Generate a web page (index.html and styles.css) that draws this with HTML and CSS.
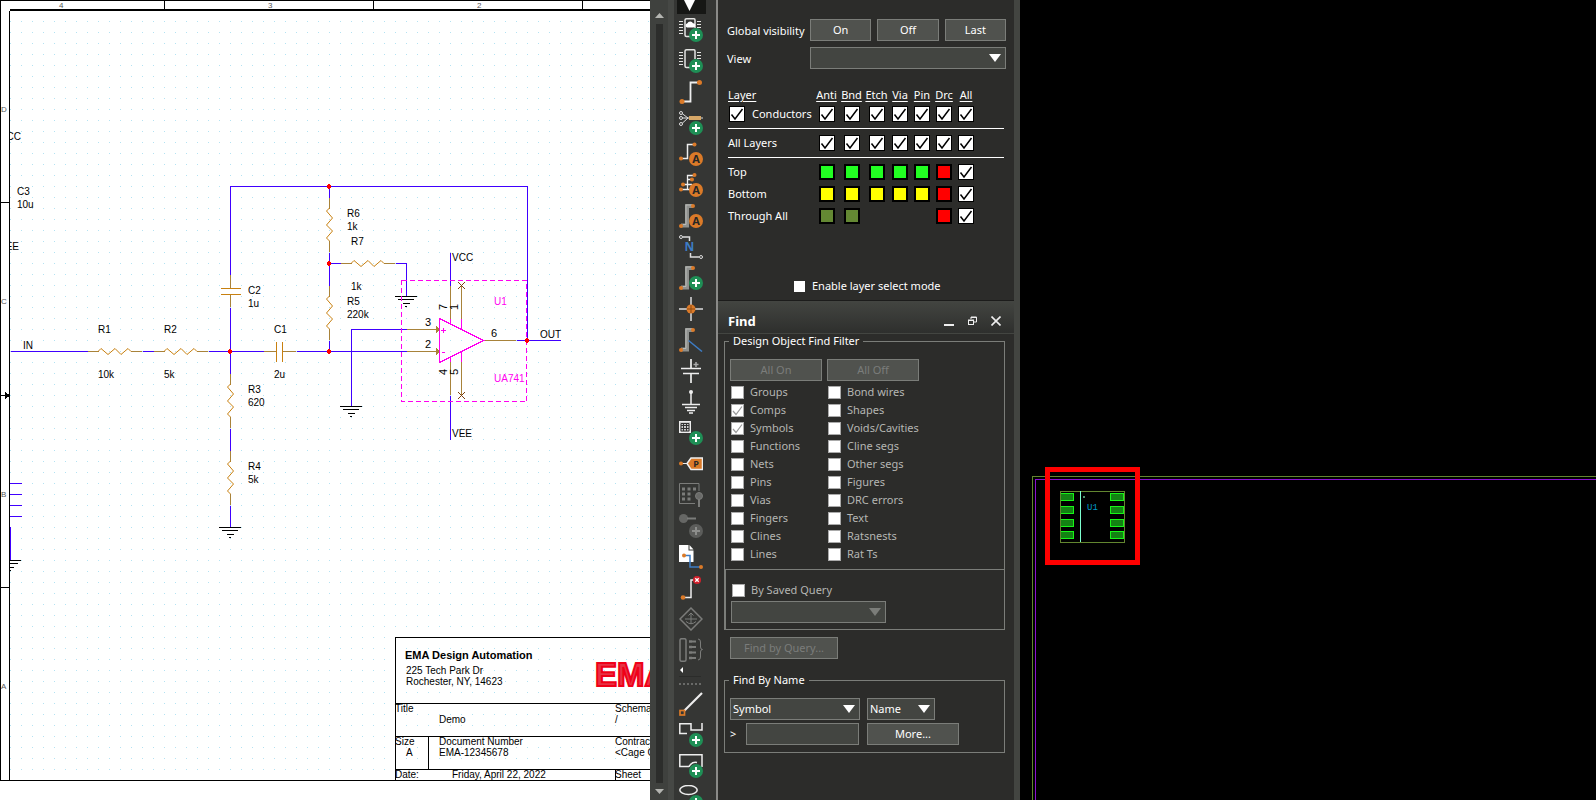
FILE: index.html
```html
<!DOCTYPE html>
<html lang="en">
<head>
<meta charset="utf-8">
<title>Schematic and PCB Layout</title>
<link rel="stylesheet" href="styles.css">
</head>
<body>
<main class="workspace">
  <section class="schematic" aria-label="Schematic">
    <svg class="sheet" role="img" aria-label="Op amp schematic">
      <defs>
        <pattern id="grid" width="11" height="11" patternUnits="userSpaceOnUse"><rect x="10" y="10" width="1" height="1" fill="#b4e2f2"/></pattern>
        <clipPath id="inner"><rect x="9" y="9" width="2000" height="2000"/></clipPath>
        <g id="res"><path class="lead" d="M0 .5H11M43 .5H54"/><path class="zig" d="M10 .5l3 -3 7 6 7 -6 6 6 7 -6 3 3"/></g>
        <g id="gnd"><path class="ink" d="M-11 .5H11M-8 3.5H8M-3 7.5H4M-1 10.5H1"/></g>
        <path id="junction" fill="#f00" d="M-1 -2h2v1h1v3h-1v1h-2v-1h-1v-3h1z"/>
      </defs>
      <rect x="9" y="11" width="100%" height="769" fill="url(#grid)"/>
      <g class="ink">
        <path d="M.5 780V.5H2000M9.5 780V11M0 780.5H2000"/>
        <path d="M164.500 0V9M373.500 0V9M582.500 0V9M0 202.500H9M0 587.500H9M0 395.500H9"/>
        <path d="M5 392l5 3.500-5 3.500z" fill="#000" stroke="none"/>
        <path d="M10 10H2000" stroke-width="2"/>
      </g>
      <g class="frame-text">
        <text x="59" y="8">4</text><text x="268" y="8">3</text><text x="477" y="8">2</text>
        <text x="1" y="112">D</text><text x="1" y="304">C</text><text x="1" y="497">B</text><text x="1" y="689">A</text>
      </g>
      <g class="wire">
        <path d="M11 351.500H88M143 351.500H154M209 351.500H264M297 351.500H407"/>
        <path d="M230.500 275V186.500H527.500V340M230.500 308V374M230.500 429V451M230.500 506V527"/>
        <path d="M329.500 186V198M329.500 253V286M329.500 341V351M329 263.500H341M396 263.500H406.500V296"/>
        <path d="M407 329.500H351.500V406M450.500 253V286M450.500 396V440M517 340.500H561"/>
        <path d="M10 483.500H22M10 494.500H22M10 505.500H22M10 516.500H22M10.500 527V560"/>
      </g>
      <use href="#res" transform="translate(88 351)"/>
      <use href="#res" transform="translate(154 351)"/>
      <use href="#res" transform="translate(341 263)"/>
      <use href="#res" transform="translate(230 374) rotate(90) scale(1 -1)"/>
      <use href="#res" transform="translate(230 451) rotate(90) scale(1 -1)"/>
      <use href="#res" transform="translate(329 198) rotate(90) scale(1 -1)"/>
      <use href="#res" transform="translate(329 286) rotate(90) scale(1 -1)"/>
      <path class="lead" d="M264 351.500H276M283 351.500H296M230.500 275V288M230.500 295V307"/>
      <path class="plate" d="M276.500 342V362M282.500 342V362M221 288.500H241M221 294.500H241"/>
      <use href="#gnd" x="230" y="527"/><use href="#gnd" x="351" y="406"/><use href="#gnd" x="406" y="296"/>
      <g clip-path="url(#inner)"><use href="#gnd" x="10" y="560"/></g>
      <path class="lead" d="M407 329.500H436M407 351.500H436M483 340.500H516M450.500 286V320M450.500 362V395M461.500 285V319M461.500 362V395"/>
      <path fill="#a8823a" d="M436 326l4 3.500-4 3.500zM436 348l4 3.500-4 3.500z"/>
      <path class="cross" d="M458 282l7 7M465 282l-7 7M458 392l7 7M465 392l-7 7"/>
      <path class="part" d="M439.500 318.500V362.500L483.500 340.500ZM450.500 319V323M461.500 319V329M450.500 358V362M461.500 351V362M441 330.500H446M443.500 328V333M442 352.500H445"/>
      <rect class="selection" x="401.500" y="280.500" width="125" height="121"/>
      <g><use href="#junction" x="329" y="186"/><use href="#junction" x="329" y="263"/><use href="#junction" x="329" y="351"/><use href="#junction" x="230" y="351"/><use href="#junction" x="527" y="340"/></g>
      <g class="label">
        <text x="23" y="349">IN</text><text x="98" y="333">R1</text><text x="98" y="378">10k</text>
        <text x="164" y="333">R2</text><text x="164" y="378">5k</text>
        <text x="274" y="333">C1</text><text x="274" y="378">2u</text>
        <text x="248" y="294">C2</text><text x="248" y="307">1u</text>
        <text x="248" y="393">R3</text><text x="248" y="406">620</text>
        <text x="248" y="470">R4</text><text x="248" y="483">5k</text>
        <text x="347" y="217">R6</text><text x="347" y="230">1k</text>
        <text x="351" y="245">R7</text><text x="351" y="290">1k</text>
        <text x="347" y="305">R5</text><text x="347" y="318">220k</text>
        <text x="452" y="261">VCC</text><text x="452" y="437">VEE</text><text x="540" y="338">OUT</text>
        <text x="17" y="195">C3</text><text x="17" y="208">10u</text>
        <g clip-path="url(#inner)"><text x="21" y="140" text-anchor="end">VCC</text><text x="19" y="250" text-anchor="end">VEE</text></g>
        <text class="mag" x="494" y="305">U1</text><text class="mag" x="494" y="382">UA741</text>
      </g>
      <g class="label pin">
        <text x="425" y="326">3</text><text x="425" y="348">2</text><text x="491" y="337">6</text>
        <text transform="translate(447 310) rotate(-90)">7</text><text transform="translate(458 310) rotate(-90)">1</text>
        <text transform="translate(447 375) rotate(-90)">4</text><text transform="translate(458 375) rotate(-90)">5</text>
      </g>
      <g class="ink"><path d="M395.500 780V637.500H2000M395 703.500H2000M395 736.500H2000M395 769.500H2000M428.500 736V769M615.500 769V780"/></g>
      <g class="label">
        <text class="company" x="405" y="659">EMA Design Automation</text>
        <text x="406" y="674">225 Tech Park Dr</text><text x="406" y="685">Rochester, NY, 14623</text>
        <text x="395" y="712">Title</text><text x="439" y="723">Demo</text><text x="615" y="712">Schematic</text><text x="615" y="723">/</text>
        <text x="395" y="745">Size</text><text x="406" y="756">A</text><text x="439" y="745">Document Number</text><text x="439" y="756">EMA-12345678</text>
        <text x="615" y="745">Contract</text><text x="615" y="756">&lt;Cage Code&gt;</text>
        <text x="395" y="778">Date:</text><text x="452" y="778">Friday, April 22, 2022</text><text x="615" y="778">Sheet</text>
      </g>
      <text class="logo" x="595" y="686">EMA</text>
    </svg>
  </section>

  <div class="scroll" aria-hidden="true">
    <svg width="9" height="5" viewBox="0 0 9 5"><path d="M4.500 0L9 5H0z" fill="#b4b5b1"/></svg>
    <div class="track"></div>
    <svg width="9" height="5" viewBox="0 0 9 5"><path d="M0 0H9L4.500 5z" fill="#b4b5b1"/></svg>
  </div>

  <svg width="0" height="0" class="defs" aria-hidden="true">
    <defs>
      <g id="plus"><circle cx="17" cy="17" r="7" fill="#1f8f56"/><path d="M13 17H21M17 13V21" stroke="#fff" stroke-width="2" fill="none"/></g>
      <g id="auto"><circle cx="17" cy="17" r="7" fill="#db7a28"/><text x="17" y="21" text-anchor="middle" class="glyph">A</text></g>
      <g id="chip" fill="none" stroke="#e4e4e2"><path d="M14 18.500H7.500Q6 18.500 6 17V2Q6 .8 7.500 .8H15Q16 .8 16 2V10" stroke-width="1.500"/><path d="M0 3.500H4M0 6.500H4M0 9.500H4M0 12.500H4M0 15.500H4M18 3.500H22M18 6.500H22M18 9.500H22"/></g>
      <g id="bracket"><path d="M2 21.500H8V2H14" fill="none" stroke="#8f918e" stroke-width="4"/><path d="M4 20.500H7V1H13" fill="none" stroke="#b9bab7"/><circle cx="14" cy="2" r="2" fill="#db7a28"/><circle cx="2" cy="22" r="2" fill="#db7a28"/></g>
    </defs>
  </svg>
  <div class="toolbar" role="toolbar" aria-label="Tools">
    <button class="tool current" aria-label="Select"><svg viewBox="0 10 24 14"><path d="M5 10H16L10.500 21z" fill="#fff"/></svg></button>
    <button class="tool" aria-label="Place cloud part"><svg viewBox="0 0 24 24"><use href="#chip"/><path d="M8 9.500a2.200 2.200 0 0 1 .4-4.200 3 3 0 0 1 5.600 0 2.100 2.100 0 0 1 .4 4.200z" fill="#fff"/><use href="#plus"/></svg></button>
    <button class="tool" aria-label="Place part"><svg viewBox="0 0 24 24"><use href="#chip"/><use href="#plus"/></svg></button>
    <button class="tool" aria-label="Place wire"><svg viewBox="0 0 24 24"><path d="M3 21.500H11.500V2.500H20" fill="none" stroke="#eee" stroke-width="1.800"/><circle cx="20.500" cy="2.500" r="2.500" fill="#db7a28"/><circle cx="3" cy="21.500" r="2.500" fill="#db7a28"/></svg></button>
    <button class="tool" aria-label="Place net group"><svg viewBox="0 0 24 24"><path d="M3 2.500L9 7 3 12.500M3 7H10M22 7H24" fill="none" stroke="#ddd"/><g fill="#353634" stroke="#ddd"><circle cx="2" cy="2" r="1.500"/><circle cx="2" cy="7" r="1.500"/><circle cx="2" cy="13" r="1.500"/></g><rect x="10" y="5" width="12" height="4" fill="#d6a767"/><use href="#plus"/></svg></button>
    <button class="tool" aria-label="Auto wire two points"><svg viewBox="0 0 24 24"><path d="M2 16.500H8.500V2.500H15" fill="none" stroke="#eee" stroke-width="1.500"/><g fill="#db7a28"><circle cx="15.500" cy="2.500" r="2"/><circle cx="2" cy="16.500" r="2"/></g><use href="#auto"/></svg></button>
    <button class="tool" aria-label="Auto wire multiple points"><svg viewBox="0 0 24 24"><path d="M2 16.500H8.500V2.500H15M8.500 6.500H13M4 11.500H13M8.500 16.500H11" fill="none" stroke="#eee" stroke-width="1.300"/><g fill="#db7a28"><circle cx="15.500" cy="2" r="2"/><circle cx="13" cy="6.500" r="2"/><circle cx="4" cy="11.500" r="2"/><circle cx="2" cy="16.500" r="2"/></g><use href="#auto"/></svg></button>
    <button class="tool" aria-label="Auto connect to bus"><svg viewBox="0 0 24 24"><use href="#bracket"/><use href="#auto"/></svg></button>
    <button class="tool" aria-label="Place net alias"><svg viewBox="0 0 24 24"><path d="M4 2H10.500V6M11.500 18V22H20" fill="none" stroke="#ddd" stroke-width="1.500"/><circle cx="2" cy="2" r="1.500" fill="none" stroke="#ddd"/><circle cx="22" cy="22" r="1.500" fill="none" stroke="#ddd"/><text x="10.500" y="16" text-anchor="middle" class="glyph blue">N</text></svg></button>
    <button class="tool" aria-label="Place bus"><svg viewBox="0 0 24 24"><use href="#bracket"/><use href="#plus"/></svg></button>
    <button class="tool" aria-label="Place junction"><svg viewBox="0 0 24 24"><path d="M0 12H24M12 0V24" stroke="#ddd" stroke-width="1.500"/><circle cx="12" cy="12" r="4.500" fill="#db7a28"/><path d="M8 12H16M12 8V16" stroke="#8d4a12"/></svg></button>
    <button class="tool" aria-label="Place bus entry"><svg viewBox="0 0 24 24"><use href="#bracket"/><path d="M9.500 12.500L23 23.500" stroke="#3d7cc4" stroke-width="1.500"/></svg></button>
    <button class="tool" aria-label="Place power"><svg viewBox="0 0 24 24"><path d="M12 0V9.500M2 9.500H22M4 14.500H20M12 14.500V24" stroke="#eee" stroke-width="1.700" fill="none"/><path d="M14.500 5.500H19.500M17 3V8" stroke="#aaa" stroke-width="1.500"/></svg></button>
    <button class="tool" aria-label="Place ground"><svg viewBox="0 0 24 24"><circle cx="12" cy="2" r="2" fill="#eee"/><path d="M12 2V14.500M3 14.500H21M6 17.500H18M8 20.500H16M10 23H14" stroke="#eee" stroke-width="1.500"/></svg></button>
    <button class="tool" aria-label="Place hierarchical block"><svg viewBox="0 0 24 24"><rect x=".5" y=".5" width="11" height="11" fill="#ccc" stroke="#eee"/><path d="M2 4.500H10M2 7.500H10M4.500 2V10M7.500 2V10M2 2.500H10V10H2z" stroke="#333" fill="none"/><use href="#plus"/></svg></button>
    <button class="tool" aria-label="Place port"><svg viewBox="0 0 24 24"><path d="M2 11.500H8" stroke="#eee"/><circle cx="2" cy="11.500" r="2" fill="#db7a28"/><path d="M8 11.500L12 6H23.500V17.500H12z" fill="#db7a28" stroke="#eee" stroke-width="1.500"/><text x="17" y="15" text-anchor="middle" class="glyph small">P</text></svg></button>
    <button class="tool" aria-label="Place pin" disabled><svg viewBox="0 0 24 24" fill="none" stroke="#7b7c7a"><path d="M20 8V.5H.5V20.500H16"/><path d="M3 6H6M8.500 6H11.500M14 6H17M3 11H6M8.500 11H11.500M3 16H6M8.500 16H11.500" stroke-width="3"/><circle cx="20" cy="13" r="3.500" fill="#6a6b69"/><path d="M20 16V24" stroke-width="2"/></svg></button>
    <button class="tool" aria-label="Place off-page pin" disabled><svg viewBox="0 0 24 24"><circle cx="4.500" cy="4.500" r="4.500" fill="#666765"/><path d="M8 4.500H17" stroke="#7b7c7a" stroke-width="2"/><circle cx="17" cy="17" r="7" fill="#5c5d5b"/><path d="M13 17H21M17 13V21" stroke="#8d8e8c" stroke-width="2"/></svg></button>
    <button class="tool" aria-label="Place off-page connector"><svg viewBox="0 0 24 24"><path d="M0 0H9.500V5.500H14.500V17H0z" fill="#fff"/><path d="M10.500 0L14.500 4.500H10.500z" fill="#fff"/><path d="M5 10.500H11V22H22" stroke="#3d7cc4" stroke-width="1.500" fill="none"/><circle cx="5" cy="10.500" r="2" fill="#db7a28"/><circle cx="22" cy="22" r="2" fill="#db7a28"/></svg></button>
    <button class="tool" aria-label="No connect"><svg viewBox="0 0 24 24"><path d="M4 21.500H12V4H15" fill="none" stroke="#eee" stroke-width="1.500"/><circle cx="4" cy="21.500" r="2.300" fill="#db7a28"/><circle cx="18" cy="4" r="4" fill="#d3202c"/><path d="M16.300 2.300l3.400 3.400M19.700 2.300l-3.400 3.400" stroke="#fff" stroke-width="1.300"/></svg></button>
    <button class="tool" aria-label="Signal navigation" disabled><svg viewBox="0 0 24 24" fill="none" stroke="#7b7c7a"><path d="M12 1L23 12 12 23 1 12z" stroke-width="1.500"/><path d="M12 6V17M9.500 8.500L12 6 14.500 8.500M6 12H18M7 14.500Q12 19 17 14.500"/></svg></button>
    <button class="tool" aria-label="NetGroup pins" disabled><svg viewBox="0 0 24 24" fill="none" stroke="#7b7c7a"><rect x="1" y=".7" width="6" height="22.500" rx="1.500" stroke-width="1.500"/><path d="M10 3.500H13M10 9H13M10 14.500H13M10 20H13" stroke-width="2.500"/><path d="M13 3.500H17M13 9H17M13 14.500H17M13 20H17" stroke-width="2"/><path d="M19 1Q21.500 1 21.500 4V9Q21.500 11.500 23.500 11.500 21.500 11.500 21.500 14V19Q21.500 22 19 22"/></svg></button>
    <div class="more"><svg width="3" height="6" viewBox="0 0 3 6"><path d="M3 0V6L0 3z" fill="#fff"/></svg></div>
    <div class="grip"></div>
    <button class="tool" aria-label="Draw line"><svg viewBox="0 0 24 24"><path d="M23 1L4 20" stroke="#eee" stroke-width="2.200"/><rect x="1" y="18.500" width="4.500" height="4.500" fill="#353634" stroke="#db7a28" stroke-width="1.700"/></svg></button>
    <button class="tool" aria-label="Draw polyline"><svg viewBox="0 0 24 24"><path d="M8 10.500H.8V.8H12V7H23V0" fill="none" stroke="#eee" stroke-width="1.500"/><use href="#plus"/></svg></button>
    <button class="tool" aria-label="Draw shape"><svg viewBox="0 0 24 24"><path d="M10 12.500H.8V.8H23V13M10 12.500Q13 7.500 18 8.500" fill="none" stroke="#eee" stroke-width="1.500"/><use href="#plus"/></svg></button>
    <button class="tool" aria-label="Draw ellipse"><svg viewBox="0 0 24 24"><ellipse cx="9.500" cy="5" rx="8.700" ry="4.500" fill="none" stroke="#eee" stroke-width="1.500"/><use href="#plus"/></svg></button>
  </div>

  <aside class="panel">
    <section class="visibility" aria-label="Visibility">
      <div class="vis-grid">
        <span class="vis-name">Global visibility</span>
        <div class="btn-row"><button class="btn">On</button><button class="btn">Off</button><button class="btn">Last</button></div>
        <label class="vis-name" for="view">View</label>
        <select id="view" class="select"><option></option></select>
      </div>
      <table class="layers">
        <colgroup><col class="c-name"><col class="c-wide"><col class="c-wide"><col class="c-wide"><col class="c-thin"><col class="c-thin"><col class="c-thin"><col class="c-thin"><col></colgroup>
        <thead><tr><th scope="col">Layer</th><th scope="col">Anti</th><th scope="col">Bnd</th><th scope="col">Etch</th><th scope="col">Via</th><th scope="col">Pin</th><th scope="col">Drc</th><th scope="col">All</th><td></td></tr></thead>
        <tbody>
          <tr class="cond"><th scope="row"><label class="cond-label"><input type="checkbox" class="tick" checked>Conductors</label></th>
            <td><input type="checkbox" class="tick" checked aria-label="Conductors Anti"></td><td><input type="checkbox" class="tick" checked aria-label="Conductors Bnd"></td><td><input type="checkbox" class="tick" checked aria-label="Conductors Etch"></td><td><input type="checkbox" class="tick" checked aria-label="Conductors Via"></td><td><input type="checkbox" class="tick" checked aria-label="Conductors Pin"></td><td><input type="checkbox" class="tick" checked aria-label="Conductors Drc"></td><td><input type="checkbox" class="tick" checked aria-label="Conductors All"></td><td></td></tr>
          <tr class="all-layers"><th scope="row">All Layers</th>
            <td><input type="checkbox" class="tick" checked aria-label="All layers Anti"></td><td><input type="checkbox" class="tick" checked aria-label="All layers Bnd"></td><td><input type="checkbox" class="tick" checked aria-label="All layers Etch"></td><td><input type="checkbox" class="tick" checked aria-label="All layers Via"></td><td><input type="checkbox" class="tick" checked aria-label="All layers Pin"></td><td><input type="checkbox" class="tick" checked aria-label="All layers Drc"></td><td><input type="checkbox" class="tick" checked aria-label="All layers All"></td><td></td></tr>
          <tr class="layer first"><th scope="row">Top</th>
            <td><button class="swatch green" aria-label="Top Anti"></button></td><td><button class="swatch green" aria-label="Top Bnd"></button></td><td><button class="swatch green" aria-label="Top Etch"></button></td><td><button class="swatch green" aria-label="Top Via"></button></td><td><button class="swatch green" aria-label="Top Pin"></button></td><td><button class="swatch red" aria-label="Top Drc"></button></td><td><input type="checkbox" class="tick" checked aria-label="Top All"></td><td></td></tr>
          <tr class="layer"><th scope="row">Bottom</th>
            <td><button class="swatch yellow" aria-label="Bottom Anti"></button></td><td><button class="swatch yellow" aria-label="Bottom Bnd"></button></td><td><button class="swatch yellow" aria-label="Bottom Etch"></button></td><td><button class="swatch yellow" aria-label="Bottom Via"></button></td><td><button class="swatch yellow" aria-label="Bottom Pin"></button></td><td><button class="swatch red" aria-label="Bottom Drc"></button></td><td><input type="checkbox" class="tick" checked aria-label="Bottom All"></td><td></td></tr>
          <tr class="layer"><th scope="row">Through All</th>
            <td><button class="swatch olive" aria-label="Through All Anti"></button></td><td><button class="swatch olive" aria-label="Through All Bnd"></button></td><td></td><td></td><td></td><td><button class="swatch red" aria-label="Through All Drc"></button></td><td><input type="checkbox" class="tick" checked aria-label="Through All All"></td><td></td></tr>
        </tbody>
      </table>
      <label class="select-mode"><input type="checkbox" class="mini">Enable layer select mode</label>
    </section>

    <header class="find-head">
      <h2>Find</h2>
      <button class="win" aria-label="Minimize"><svg width="10" height="10" viewBox="0 0 10 10"><rect y="8" width="10" height="2" fill="#eee"/></svg></button>
      <button class="win" aria-label="Float"><svg width="9" height="10" viewBox="0 0 9 10" fill="none" stroke="#eee"><path d="M3 3V1H8.500V6H6"/><path d="M3 1.500H9"/><rect x=".5" y="4.500" width="5" height="4"/><path d="M0 4H6"/></svg></button>
      <button class="win" aria-label="Close"><svg width="10" height="10" viewBox="0 0 10 10"><path d="M.5 .5L9.500 9.500M9.500 .5L.5 9.500" stroke="#eee" stroke-width="1.600"/></svg></button>
    </header>

    <section class="find" aria-label="Find">
      <fieldset class="group filter">
        <legend>Design Object Find Filter</legend>
        <div class="pair"><button class="btn" disabled>All On</button><button class="btn" disabled>All Off</button></div>
        <div class="pair checks">
          <div>
            <label><input type="checkbox" class="box" disabled>Groups</label>
            <label><input type="checkbox" class="box" disabled checked>Comps</label>
            <label><input type="checkbox" class="box" disabled checked>Symbols</label>
            <label><input type="checkbox" class="box" disabled>Functions</label>
            <label><input type="checkbox" class="box" disabled>Nets</label>
            <label><input type="checkbox" class="box" disabled>Pins</label>
            <label><input type="checkbox" class="box" disabled>Vias</label>
            <label><input type="checkbox" class="box" disabled>Fingers</label>
            <label><input type="checkbox" class="box" disabled>Clines</label>
            <label><input type="checkbox" class="box" disabled>Lines</label>
          </div>
          <div>
            <label><input type="checkbox" class="box" disabled>Bond wires</label>
            <label><input type="checkbox" class="box" disabled>Shapes</label>
            <label><input type="checkbox" class="box" disabled>Voids/Cavities</label>
            <label><input type="checkbox" class="box" disabled>Cline segs</label>
            <label><input type="checkbox" class="box" disabled>Other segs</label>
            <label><input type="checkbox" class="box" disabled>Figures</label>
            <label><input type="checkbox" class="box" disabled>DRC errors</label>
            <label><input type="checkbox" class="box" disabled>Text</label>
            <label><input type="checkbox" class="box" disabled>Ratsnests</label>
            <label><input type="checkbox" class="box" disabled>Rat Ts</label>
          </div>
        </div>
      </fieldset>
      <div class="saved">
        <label><input type="checkbox" class="box" disabled>By Saved Query</label>
        <select class="select" disabled aria-label="Saved query"><option></option></select>
      </div>
      <button class="btn query" disabled>Find by Query...</button>
      <fieldset class="group by-name">
        <legend>Find By Name</legend>
        <div class="name-grid">
          <select class="select" aria-label="Object type"><option>Symbol</option></select>
          <select class="select name-kind" aria-label="Match by"><option>Name</option></select>
          <label class="prompt">&gt;<input type="text" class="field"></label>
          <button class="btn">More...</button>
        </div>
      </fieldset>
    </section>
  </aside>

  <section class="pcb" aria-label="PCB layout">
    <svg class="board" role="img" aria-label="Board outline with component U1">
      <path d="M2000 476.500H12.500V2000" fill="none" stroke="#62862f"/>
      <path d="M2000 479.500H15.500V2000" fill="none" stroke="#8a10d0"/>
      <rect x="40.500" y="491.500" width="64" height="51" fill="none" stroke="#62862f"/>
      <g fill="#138213" stroke="#17f517">
        <path d="M41 493.500H53.500V500.500H41M41 506.500H53.500V513.500H41M41 519.500H53.500V526.500H41M41 531.500H53.500V538.500H41"/>
        <path d="M90.500 493.500H103.500V500.500H90.500zM90.500 506.500H103.500V513.500H90.500zM90.500 519.500H103.500V526.500H90.500zM90.500 531.500H103.500V538.500H90.500z"/>
      </g>
      <path d="M60.500 491V542" stroke="#7dffd0"/>
      <rect x="63" y="496" width="2" height="2" fill="#4d9070"/>
      <text x="67" y="510" class="refdes">U1</text>
      <rect x="27.500" y="469.500" width="90" height="93" fill="none" stroke="#f00" stroke-width="5"/>
    </svg>
  </section>
</main>
</body>
</html>
```

FILE: styles.css
```css
* { box-sizing: border-box; }

body {
  margin: 0;
  background: #000;
  color: #fff;
  font: 11px/16px "Noto Sans", "Open Sans", sans-serif;
}

button, input, select { margin: 0; font: inherit; color: inherit; }
button { padding: 0; border: 0; background: none; }

.workspace { display: flex; height: 100vh; overflow: hidden; }

/* Schematic sheet */
.schematic { flex: 650 1 0; min-width: 0; overflow: hidden; background: #fff; }
.sheet { display: block; width: 100%; height: 100%; shape-rendering: crispEdges; }
.ink { fill: none; stroke: #000; }
.wire { fill: none; stroke: #4000ff; }
.lead { fill: none; stroke: #a8823a; }
.plate { fill: none; stroke: #c88010; }
.zig { fill: none; stroke: #c88010; shape-rendering: auto; }
.cross { stroke: #7a4010; shape-rendering: auto; }
.part { fill: none; stroke: #ff00f0; }
.selection { fill: none; stroke: #ff00f0; stroke-dasharray: 5 3; }
.label { font: 10px "Liberation Sans", Arial, sans-serif; fill: #000; }
.label .mag { fill: #ff00f0; }
.pin { font-size: 11px; }
.label .company { font-size: 11px; font-weight: bold; }
.frame-text { font: 8px "Liberation Sans", Arial, sans-serif; fill: #555; }
.logo { font: bold 33px "Liberation Sans", Arial, sans-serif; fill: #e63346; stroke: #f00018; stroke-width: 2px; }

/* Scrollbar */
.scroll {
  display: flex;
  flex: 0 0 18px;
  flex-direction: column;
  align-items: center;
  gap: 6px;
  padding: 13px 0 6px;
  background: #3f413e;
}
.track { flex: 1; width: 7px; background: #2c2d2b; }

/* Toolbar */
.defs { position: absolute; }
.toolbar {
  flex: 0 0 50px;
  overflow: hidden;
  padding: 0 9px 0 1px;
  border-left: 6px solid #464845;
  border-right: 2px solid #8a8a88;
  background: #353634;
}
.tool { display: block; width: 30px; height: 31px; padding: 3px 3px 4px; margin-left: 1px; }
.tool svg { display: block; width: 24px; height: 24px; }
.current { width: 29px; height: 14px; padding: 0 3px 0 2px; margin: 0 0 1px 2px; background: #161715; }
.current svg { height: 14px; }
.more { display: flex; height: 10px; padding: 1px 0 0 5px; }
.grip {
  height: 13px;
  margin: 0 6px 0 4px;
  background: repeating-linear-gradient(90deg, #696a68 0 2px, transparent 2px 4px) 0 6px / 100% 2px no-repeat;
  border-top: 1px solid #2b2c2a;
}
.glyph { font: bold 11px "Open Sans", sans-serif; fill: #262626; }
.blue { font-size: 12px; fill: #3d7cc4; }
.small { font-size: 9px; }

/* Side panel */
.panel { flex: 0 0 302px; border-right: 6px solid #434541; background: #2c2c2a; }
.visibility { height: 300px; padding: 19px 8px 0; }
.vis-grid { display: grid; grid-template-columns: 84px 1fr; row-gap: 6px; align-items: center; }
.vis-name { padding: 2px 0 0 1px; white-space: nowrap; }
.btn-row { display: grid; grid-template-columns: repeat(3, 1fr); gap: 6px; }
.btn { height: 22px; border: 1px solid #7b7d79; background: #50524e; text-align: center; }
.btn:disabled { color: #7b7d7b; }
.select {
  width: 100%;
  height: 22px;
  padding: 0 2px;
  appearance: none;
  border: 1px solid #7b7d79;
  border-radius: 0;
  background: #434541 url("data:image/svg+xml,%3Csvg xmlns='http://www.w3.org/2000/svg' width='12' height='8'%3E%3Cpath d='M0 0H12L6 8z' fill='white'/%3E%3C/svg%3E") right 4px top 6px no-repeat;
}
.select:disabled {
  opacity: 1;
  background-image: url("data:image/svg+xml,%3Csvg xmlns='http://www.w3.org/2000/svg' width='12' height='8'%3E%3Cpath d='M0 0H12L6 8z' fill='%237b7d79'/%3E%3C/svg%3E");
}

.layers { width: 276px; margin: 18px 0 0 2px; border-collapse: collapse; table-layout: fixed; }
.layers th, .layers td { padding: 0; font-weight: normal; text-align: center; vertical-align: middle; white-space: nowrap; }
.layers th:first-child { text-align: left; }
.layers thead th { height: 16px; text-decoration: underline; text-underline-offset: 2px; }
.c-name { width: 86px; }
.c-wide { width: 25px; }
.c-thin { width: 22px; }
.cond { height: 25px; border-bottom: 1px solid #fff; }
.layers .cond th, .layers .cond td { padding-bottom: 3px; }
.all-layers { height: 29px; border-bottom: 1px solid #fff; }
.layer { height: 22px; }
.first { height: 26px; }
.layers .first th, .layers .first td { padding-top: 4px; }
.cond-label { display: flex; align-items: center; gap: 7px; padding-left: 1px; }

.tick, .box, .mini { display: block; flex: none; appearance: none; background: #fff center / 100% 100% no-repeat; }
.tick { width: 16px; height: 16px; margin: 0 auto; border: 1px solid #000; }
.cond-label .tick { margin: 0; }
.tick:checked { background-image: url("data:image/svg+xml,%3Csvg xmlns='http://www.w3.org/2000/svg' viewBox='0 0 14 14'%3E%3Cpath d='M1.500 7.500L5 12 12.500 2' fill='none' stroke='black' stroke-width='1.500'/%3E%3C/svg%3E"); }
.box { width: 13px; height: 13px; border: 1px solid #aaa; }
.box:checked { background-image: url("data:image/svg+xml,%3Csvg xmlns='http://www.w3.org/2000/svg' viewBox='0 0 11 11'%3E%3Cpath d='M1 6L4 9.500 10 1.500' fill='none' stroke='%23999' stroke-width='1.200'/%3E%3C/svg%3E"); }
.mini { width: 11px; height: 11px; }
.swatch { display: block; width: 16px; height: 16px; margin: 0 auto; border: 2px solid #000; }
.green { background: #22ff22; }
.yellow { background: #ffff00; }
.red { background: #ff0000; }
.olive { background: #648833; }

.select-mode { display: flex; align-items: center; gap: 7px; margin: 51px 0 0 68px; }

.find-head {
  display: flex;
  align-items: center;
  gap: 14px;
  height: 34px;
  padding: 7px 13px 0 10px;
  border-top: 1px solid #1c1c1b;
  border-bottom: 1px solid #434541;
  background: linear-gradient(#434541, #2e2f2d);
}
.find-head h2 { flex: 1; margin: 0; font-size: 13px; line-height: 18px; }
.win { display: block; }
.win svg { display: block; }

.find { padding: 0 9px 0 6px; color: #b5b6b3; }
.group { min-width: 0; margin: 0; padding: 0 0 0 5px; border: 1px solid #7b7d79; }
.group legend { margin-left: -1px; padding: 0 4px; line-height: 14px; color: #fff; }
.filter { height: 236px; }
.pair { display: grid; grid-template-columns: 92px 92px; column-gap: 5px; padding-top: 11px; }
.checks { grid-template-columns: 92px 1fr; padding: 2px 0 0 1px; }
.checks label, .saved label { display: flex; align-items: center; gap: 6px; height: 18px; white-space: nowrap; }
.saved { height: 61px; margin-top: -1px; padding: 11px 0 0 5px; border: 1px solid #7b7d79; border-left-width: 2px; }
.saved label { padding-left: 1px; }
.saved .select { display: block; width: 155px; margin-top: 2px; }
.query { display: block; width: 108px; margin: 7px 0 14px 6px; }
.by-name { height: 80px; color: #fff; }
.name-grid { display: grid; grid-template-columns: 130px 92px; gap: 3px 7px; padding-top: 11px; }
.name-kind { width: 68px; }
.prompt { display: flex; align-items: center; gap: 10px; }
.field { width: 113px; height: 22px; padding: 0 3px; border: 1px solid #7b7d79; background: #434541; }

/* PCB canvas */
.pcb { flex: 576 1 0; min-width: 0; overflow: hidden; background: #000; }
.board { display: block; width: 100%; height: 100%; shape-rendering: crispEdges; }
.refdes { font: 9px "Liberation Mono", monospace; fill: #0099c8; }
```
